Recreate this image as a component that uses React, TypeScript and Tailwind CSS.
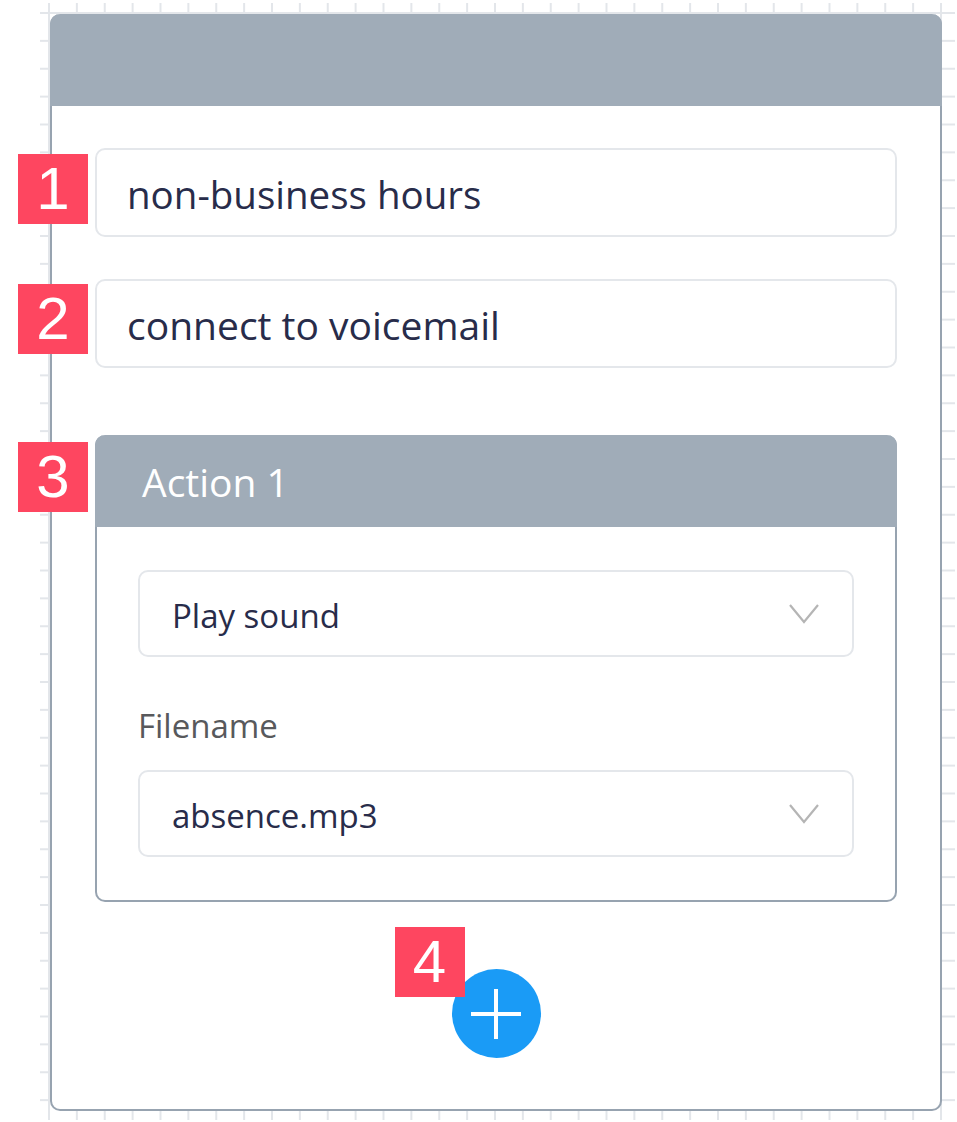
import React from "react";

function Badge({ n, className }: { n: string; className: string }) {
  return (
    <div
      className={`absolute z-10 flex h-[70px] w-[70px] items-center justify-center bg-[#fe4660] text-[60px] leading-none text-white font-['Liberation_Sans',Arial,sans-serif] ${className}`}
    >
      {n}
    </div>
  );
}

function Chevron() {
  return (
    <svg width="32" height="22" viewBox="0 0 32 22" fill="none">
      <polyline points="2,2 16,19 30,2" stroke="#b5b5b5" strokeWidth="2.2" />
    </svg>
  );
}

function Select({ value }: { value: string }) {
  return (
    <div className="flex h-[87px] items-center justify-between rounded-[10px] border-2 border-[#e4e7eb] bg-white pl-[32px] pr-[32px]">
      <span className="pt-[4px] text-[33px] text-[#282c4a]">{value}</span>
      <Chevron />
    </div>
  );
}

export default function App() {
  return (
    <div className="h-[1122px] w-[957px] bg-white pl-[40px] pt-[3px] font-['Open_Sans','Noto_Sans',sans-serif]">
      <div className="h-[1117px] w-[915px] bg-[linear-gradient(to_right,#e3e6ea_2px,transparent_2px),linear-gradient(to_bottom,#e3e6ea_2px,transparent_2px)] bg-[size:27.88px_27.88px] bg-[position:8px_9px] pl-[10px] pt-[11px]">
        <div className="flex h-[1097px] w-[892px] flex-col rounded-[10px] border-x-2 border-b-2 border-[#97a3b0] bg-white">
          <div className="-mx-[2px] h-[92px] shrink-0 rounded-t-[10px] bg-[#a0acb8]" />
          <div className="flex flex-col px-[43px] pt-[42px]">
            <div className="relative">
              <Badge n="1" className="left-[-77px] top-[6px]" />
              <div className="flex h-[89px] items-center rounded-[10px] border-2 border-[#e4e7eb] pl-[30px]">
                <span className="pt-[4px] text-[38.5px] text-[#282c4a]">non-business hours</span>
              </div>
            </div>
            <div className="relative mt-[42px]">
              <Badge n="2" className="left-[-77px] top-[5px]" />
              <div className="flex h-[89px] items-center rounded-[10px] border-2 border-[#e4e7eb] pl-[30px]">
                <span className="pt-[4px] text-[39px] text-[#282c4a]">connect to voicemail</span>
              </div>
            </div>
            <div className="relative mt-[67px]">
              <Badge n="3" className="left-[-77px] top-[7px]" />
              <div className="flex flex-col rounded-[10px] border-x-2 border-b-2 border-[#97a3b0]">
                <div className="-mx-[2px] flex h-[92px] items-center rounded-t-[10px] bg-[#a0acb8] pl-[47px]">
                  <span className="pt-[2px] text-[39px] text-white">Action 1</span>
                </div>
                <div className="flex flex-col px-[41px] pb-[43px] pt-[43px]">
                  <Select value="Play sound" />
                  <div className="flex h-[113px] items-center pt-[24px] text-[33px] text-[#58595c]">
                    Filename
                  </div>
                  <Select value="absence.mp3" />
                </div>
              </div>
            </div>
            <div className="mt-[67px] flex justify-center">
              <div className="relative">
                <Badge n="4" className="left-[-57px] top-[-42px]" />
                <div className="flex h-[89px] w-[89px] items-center justify-center rounded-full bg-[#1a9bf6]">
                  <svg width="50" height="50" viewBox="0 0 50 50">
                    <line x1="0" y1="25" x2="50" y2="25" stroke="white" strokeWidth="4" />
                    <line x1="25" y1="0" x2="25" y2="50" stroke="white" strokeWidth="4" />
                  </svg>
                </div>
              </div>
            </div>
          </div>
        </div>
      </div>
    </div>
  );
}
